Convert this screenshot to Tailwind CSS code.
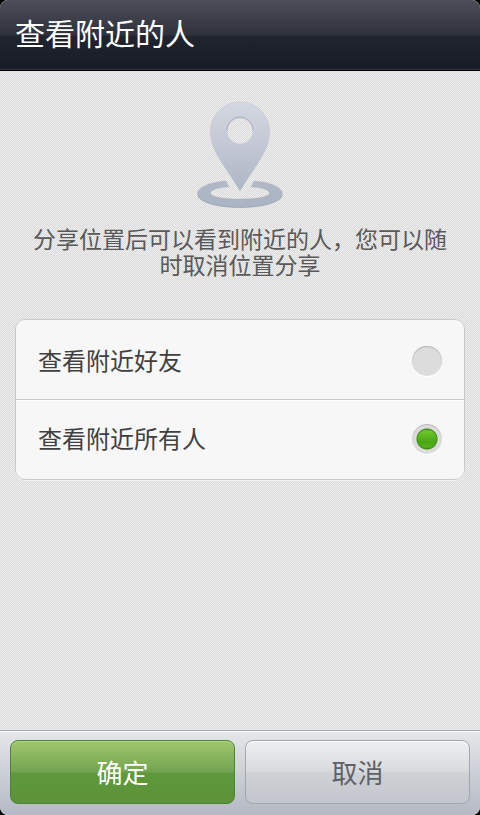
<!DOCTYPE html>
<html lang="zh-CN">
<head>
<meta charset="utf-8">
<meta name="viewport" content="width=device-width, initial-scale=1">
<title>查看附近的人</title>
<script src="https://cdn.jsdelivr.net/npm/@tailwindcss/browser@4"></script>
</head>
<body class="bg-black font-['Noto_Sans_CJK_SC',sans-serif]">
<div class="flex min-h-screen flex-col overflow-hidden rounded-lg bg-[repeating-conic-gradient(#dadada_0_25%,#eeeeee_0_50%)] bg-[length:2px_2px]">
  <header class="flex h-[71px] items-center border-b border-black bg-[linear-gradient(#4c4e5a_0%,#2f323d_50%,#20242e_52%,#181c27_100%)] px-[15px] pb-1.5 shadow-[inset_0_-1px_0_#34343c]">
    <h1 class="text-[30px] leading-[40px] text-white">查看附近的人</h1>
  </header>

  <main class="flex flex-1 flex-col px-[15px] pt-[30px]">
    <svg class="mx-auto h-[110px] w-[90px]" viewBox="0 1 90 110" aria-hidden="true">
      <defs>
        <linearGradient id="pin" x1="0" y1="0" x2="0" y2="110" gradientUnits="userSpaceOnUse">
          <stop offset="0" stop-color="#d5d8e2"/>
          <stop offset="0.4" stop-color="#c3c8d4"/>
          <stop offset="0.85" stop-color="#acb5c4"/>
          <stop offset="1" stop-color="#aab5c5"/>
        </linearGradient>
      </defs>
      <g fill="url(#pin)" fill-rule="evenodd" stroke="#a3abba" stroke-opacity="0.4" stroke-width="0.5">
        <path d="M45 91C40 82 32 71 25 60C19 50 15.300 41 15.300 31.500A29.700 29.700 0 0 1 74.700 31.500C74.700 41 71 50 65 60C58 71 50 82 45 91ZM45 18A13 13 0 1 0 45 44A13 13 0 1 0 45 18Z"/>
        <path d="M31 81C14 82 2.500 87.500 2.500 94C2.500 101.500 21.500 107.500 45 107.500C68.500 107.500 87.500 101.500 87.500 94C87.500 87.500 76 82 59 81L56 87C67 87.500 74.500 90 74.500 93C74.500 96.500 61.500 99 45 99C28.500 99 15.500 96.500 15.500 93C15.500 90 23 87.500 34 87Z"/>
      </g>
      <path d="M32 30A13 13 0 0 1 58 30" fill="none" stroke="#9aa0ae" stroke-opacity="0.7" stroke-width="1"/>
      <path d="M3 96C6 103 24 107.300 45 107.300S84 103 87 96" fill="none" stroke="#9099a9" stroke-opacity="0.7" stroke-width="0.8"/>
    </svg>

    <p class="mt-3.5 px-4 text-center text-[23px] leading-[26px] text-[#595959]">分享位置后可以看到附近的人，您可以随时取消位置分享</p>

    <fieldset aria-label="查看范围" class="mt-[42px] divide-y divide-[#c9c9c9] rounded-[10px] border border-[#c9c9c9] bg-[#f7f7f7] text-2xl text-[#404040] shadow-[0_1px_0_#f4f4f4]">
      <label class="flex h-20 items-center justify-between px-[22px] pt-0.5">
        <span class="pb-0.5">查看附近好友</span>
        <input type="radio" name="scope" class="size-[30px] appearance-none rounded-full bg-[#dcdcdc] shadow-[inset_0_1px_1px_#b4b4b4,0_1px_0_#ffffff] checked:bg-[radial-gradient(circle,transparent_9px,#3f8a16_10px,#dcdcdc_11px),linear-gradient(#43891b_5px,#6cc62b_7px,#4ba614_18px,#57b21c_23px,#3f8a16_25px)]">
      </label>
      <label class="flex h-[79px] items-center justify-between px-[22px] pb-0.5 shadow-[inset_0_1px_0_#ffffff]">
        <span class="pb-0.5">查看附近所有人</span>
        <input type="radio" name="scope" checked class="size-[30px] appearance-none rounded-full bg-[#dcdcdc] shadow-[inset_0_1px_1px_#b4b4b4,0_1px_0_#ffffff] checked:bg-[radial-gradient(circle,transparent_9px,#3f8a16_10px,#dcdcdc_11px),linear-gradient(#43891b_5px,#6cc62b_7px,#4ba614_18px,#57b21c_23px,#3f8a16_25px)]">
      </label>
    </fieldset>
  </main>

  <footer class="grid h-[85px] grid-cols-2 gap-[10px] border-t border-[#a5a7ab] bg-linear-to-b from-[#e5e7ea] to-[#b4b9c4] px-[10px] pt-[9px] pb-[11px] shadow-[inset_0_1px_0_#f8f8f8]">
    <button type="button" class="rounded-lg border border-[#4a8530] bg-[linear-gradient(#a1c66c_0%,#72a450_50%,#5f983b_52%,#5c9239_100%)] text-[26px] leading-8 text-white shadow-[inset_0_1px_0_#b7d58a]">确定</button>
    <button type="button" class="rounded-lg border border-[#a2a5ab] bg-[linear-gradient(#eeeff2_0%,#d7d9dc_50%,#cfd1d5_52%,#c3c6ce_100%)] text-[26px] leading-8 text-[#606164] shadow-[inset_0_1px_0_#fafafa]">取消</button>
  </footer>
</div>
</body>
</html>
